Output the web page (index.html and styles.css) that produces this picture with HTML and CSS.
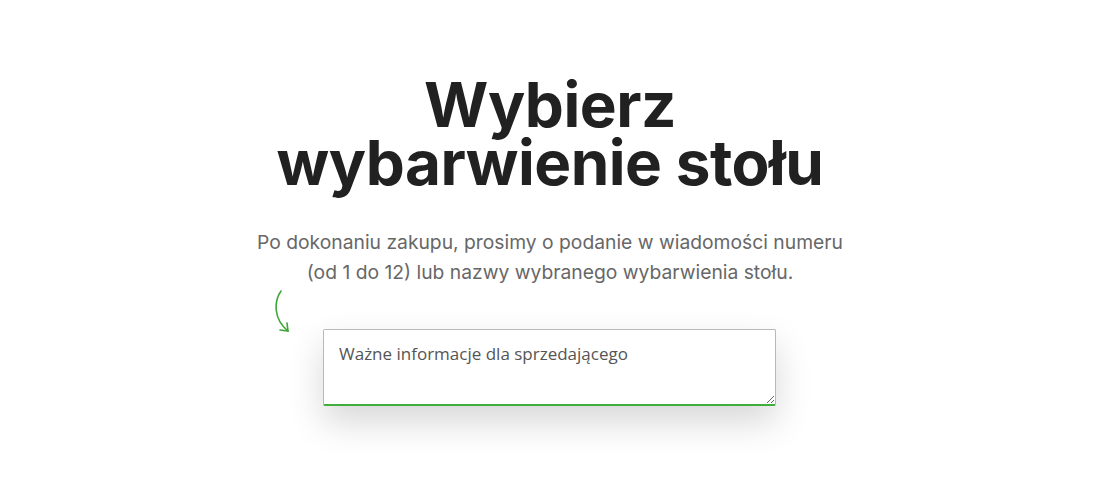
FILE: index.html
```html
<!DOCTYPE html>
<html lang="pl">
<head>
  <meta charset="UTF-8">
  <title>Wybierz wybarwienie stołu</title>
  <link rel="stylesheet" href="styles.css">
</head>
<body>
  <section class="color-pick">
    <h1 class="title">Wybierz<br>wybarwienie stołu</h1>
    <p class="lead">Po dokonaniu zakupu, prosimy o podanie w wiadomości numeru<br>(od 1 do 12) lub nazwy wybranego wybarwienia stołu.</p>
    <div class="note-row">
      <svg class="arrow" width="24" height="48" viewBox="0 0 24 48" fill="none" stroke="#3fa535" stroke-width="1.6" stroke-linecap="round">
        <path d="M9 2 C2 12, 1 30, 16 42"/>
        <path d="M8 41 L16 42 L15 34"/>
      </svg>
      <textarea class="note" placeholder="Ważne informacje dla sprzedającego"></textarea>
    </div>
  </section>
</body>
</html>
```

FILE: styles.css
```css
body {
  margin: 0;
  min-height: 490px;
  background: #ffffff;
  font-family: Inter, "Liberation Sans", sans-serif;
}

.color-pick {
  display: flex;
  flex-direction: column;
  align-items: center;
  padding: 76px 0 80px;
}

.title {
  margin: 0;
  font-size: 62px;
  font-weight: 700;
  line-height: 58px;
  letter-spacing: -0.5px;
  text-align: center;
  color: #212121;
}

.lead {
  margin: 35px 0 0;
  font-size: 19.3px;
  line-height: 30px;
  text-align: center;
  color: #676767;
}

.note-row {
  display: flex;
  align-items: flex-start;
  margin-top: 8px;
  margin-left: -52px;
}

.arrow {
  margin-top: -6px;
  margin-right: 27px;
}

.note {
  margin-top: 34px;
  width: 453px;
  height: 77px;
  box-sizing: border-box;
  padding: 12px 15px;
  border: 1px solid #b9b9b9;
  border-bottom: 2px solid #3fae3a;
  border-radius: 2px;
  font-family: "Open Sans", sans-serif;
  font-size: 17px;
  color: #444;
  box-shadow: 0 16px 36px rgba(0, 0, 0, 0.16);
  resize: vertical;
}

.note::placeholder {
  color: #555555;
}
```
